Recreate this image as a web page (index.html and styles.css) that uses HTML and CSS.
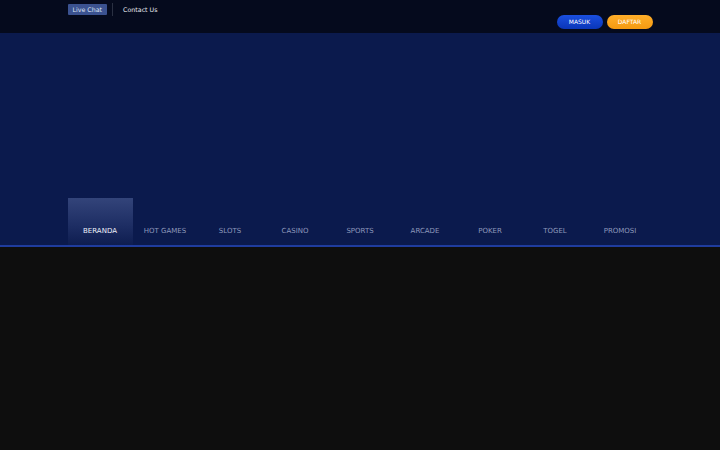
FILE: index.html
```html
<!DOCTYPE html>
<html>
<head>
<meta charset="utf-8">
<link rel="stylesheet" href="styles.css">
</head>
<body>
<header class="topbar">
  <div class="container topbar-inner">
    <div class="links">
      <a class="live">Live Chat</a>
      <span class="sep"></span>
      <a class="contact">Contact Us</a>
    </div>
    <div class="auth">
      <a class="btn masuk">MASUK</a>
      <a class="btn daftar">DAFTAR</a>
    </div>
  </div>
</header>
<section class="hero">
  <nav class="container nav">
    <a class="nav-item active">BERANDA</a>
    <a class="nav-item">HOT GAMES</a>
    <a class="nav-item">SLOTS</a>
    <a class="nav-item">CASINO</a>
    <a class="nav-item">SPORTS</a>
    <a class="nav-item">ARCADE</a>
    <a class="nav-item">POKER</a>
    <a class="nav-item">TOGEL</a>
    <a class="nav-item">PROMOSI</a>
  </nav>
</section>
<main class="content"></main>
</body>
</html>
```
FILE: styles.css
```css
html, body {
  margin: 0;
  padding: 0;
  background: #0e0e0e;
  font-family: "DejaVu Sans", sans-serif;
  height: 100%;
}
.container {
  width: 585px;
  margin: 0 auto;
}
.topbar {
  background: #050a1d;
  height: 33px;
}
.topbar-inner {
  display: flex;
  justify-content: space-between;
  height: 100%;
}
.links {
  display: flex;
  align-items: center;
  height: 19px;
  font-size: 6.3px;
}
.live {
  background: #3b5290;
  color: #dfe4f2;
  padding: 0 5px;
  height: 11px;
  line-height: 11px;
  border-radius: 1px;
}
.sep {
  width: 1px;
  height: 13px;
  background: #2a3042;
  margin: 0 10px 0 5px;
}
.contact {
  color: #e8eaf0;
}
.auth {
  display: flex;
  align-self: flex-end;
  gap: 4px;
  margin-bottom: 4px;
}
.btn {
  width: 46px;
  height: 14px;
  line-height: 14px;
  border-radius: 7px;
  text-align: center;
  font-size: 6px;
  color: #fff;
}
.masuk {
  background: linear-gradient(#1a4fe0, #0a36b8);
}
.daftar {
  background: linear-gradient(#ffae2a, #f59a10);
}
.hero {
  background: #0b1a4d;
  height: 212px;
  border-bottom: 2px solid #1f3c9e;
  display: flex;
  align-items: flex-end;
}
.nav {
  display: flex;
  height: 47px;
}
.nav-item {
  width: 65px;
  display: flex;
  align-items: flex-end;
  justify-content: center;
  padding-bottom: 10px;
  box-sizing: border-box;
  font-size: 7px;
  color: #8e99bb;
}
.nav-item.active {
  color: #eef1fa;
  background: linear-gradient(#33447a, #1d2d63 60%, #0e1d50);
}
.content {
  background: #0e0e0e;
}
```
